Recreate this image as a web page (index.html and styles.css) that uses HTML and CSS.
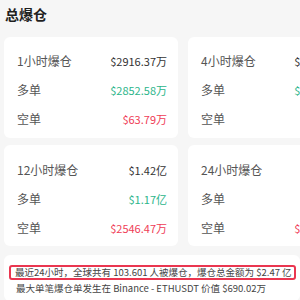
FILE: index.html
```html
<!DOCTYPE html>
<html lang="zh-CN">
<head>
<meta charset="utf-8">
<link rel="stylesheet" href="styles.css">
</head>
<body>
<div class="page">
  <h1 class="title">总爆仓</h1>
  <div class="grid">
    <div class="card">
      <div class="row"><span class="label">1小时爆仓</span><span class="val">$2916.37万</span></div>
      <div class="row"><span class="label">多单</span><span class="val up">$2852.58万</span></div>
      <div class="row"><span class="label">空单</span><span class="val down">$63.79万</span></div>
    </div>
    <div class="card">
      <div class="row"><span class="label">4小时爆仓</span><span class="val">$9862.03万</span></div>
      <div class="row"><span class="label">多单</span><span class="val up">$8705.56万</span></div>
      <div class="row"><span class="label">空单</span><span class="val down">$98.21万</span></div>
    </div>
    <div class="card card-low">
      <div class="row"><span class="label">12小时爆仓</span><span class="val">$1.42亿</span></div>
      <div class="row"><span class="label">多单</span><span class="val up">$1.17亿</span></div>
      <div class="row"><span class="label">空单</span><span class="val down">$2546.47万</span></div>
    </div>
    <div class="card card-low">
      <div class="row"><span class="label">24小时爆仓</span><span class="val">$2.47亿</span></div>
      <div class="row"><span class="label">多单</span><span class="val up">$1.95亿</span></div>
      <div class="row"><span class="label">空单</span><span class="val down">$5190.35万</span></div>
    </div>
  </div>
  <div class="summary">
    <p class="highlight">最近24小时，全球共有 103.601 人被爆仓，爆仓总金额为 $2.47 亿</p>
    <p class="line">最大单笔爆仓单发生在 Binance - ETHUSDT 价值 $690.02万</p>
  </div>
</div>
</body>
</html>
```
FILE: styles.css
```css
html, body {
  margin: 0;
  padding: 0;
  background: #f6f6f6;
  overflow: hidden;
  font-family: "Noto Sans CJK SC", "Noto Sans", sans-serif;
}
.page {
  width: 362px;
  padding: 0 0 0 4px;
  box-sizing: border-box;
}
.title {
  margin: 0;
  padding: 4px 0 0 1px;
  height: 37px;
  box-sizing: border-box;
  font-size: 14px;
  line-height: 20px;
  font-weight: 700;
  color: #1f1f1f;
}
.grid {
  display: grid;
  grid-template-columns: 174px 174px;
  gap: 7px 10px;
}
.card {
  background: #fff;
  border-radius: 6px;
  height: 101px;
  box-sizing: border-box;
  padding: 9px 11px 0 13px;
}
.card-low {
  padding-top: 10px;
}
.row {
  display: flex;
  justify-content: space-between;
  align-items: center;
  height: 29px;
}
.label {
  color: #555;
  font-size: 12px;
}
.val {
  color: #333;
  font-size: 11px;
}
.up {
  color: #2bb58a;
}
.down {
  color: #ef3c56;
}
.summary {
  margin-top: 9px;
  background: #fff;
  border-radius: 6px;
  padding: 10px 4px 6px 5px;
  width: 296px;
  box-sizing: border-box;
  font-size: 9.5px;
  color: #444;
}
.summary p {
  margin: 0;
  white-space: nowrap;
}
.highlight {
  border: 2px solid #ea3650;
  border-radius: 3px;
  padding: 0 4px;
  line-height: 11px;
}
.line {
  padding: 1px 0 0 7px;
  line-height: 14px;
}
```
